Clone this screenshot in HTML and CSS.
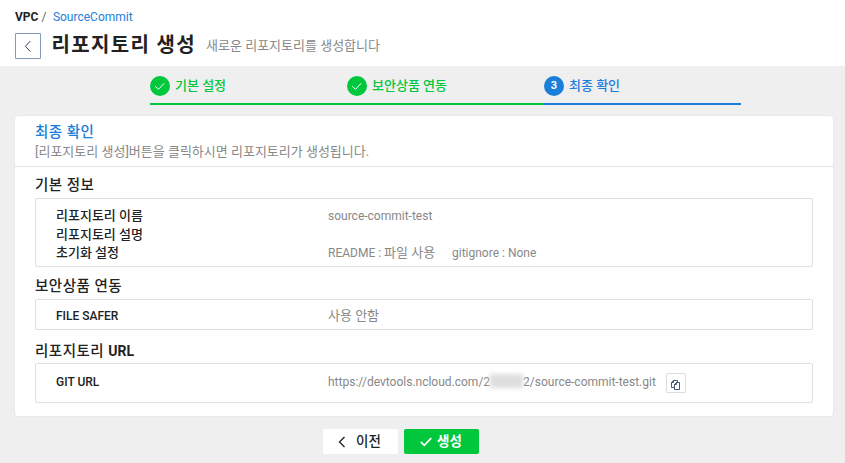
FILE: index.html
```html
<!DOCTYPE html>
<html lang="ko">
<head>
<meta charset="utf-8">
<title>리포지토리 생성</title>
<link rel="stylesheet" href="styles.css">
</head>
<body>
<header class="top">
  <nav class="crumbs"><b>VPC</b><span class="slash">/</span><a class="crumb-link">SourceCommit</a></nav>
  <div class="title-row">
    <button class="back" aria-label="이전"><svg width="24" height="24" viewBox="0 0 24 24"><path d="M14.4 7 9.4 12.3 14.4 17.6"/></svg></button>
    <h1>리포지토리 생성</h1>
    <span class="subtitle">새로운 리포지토리를 생성합니다</span>
  </div>
</header>
<ol class="steps">
  <li class="step"><span class="dot"><svg width="20" height="20" viewBox="0 0 20 20"><path d="M5.2 10.2 8.5 13.3 14.3 7.2"/></svg></span><span class="ko">기본 설정</span></li>
  <li class="step"><span class="dot"><svg width="20" height="20" viewBox="0 0 20 20"><path d="M5.2 10.2 8.5 13.3 14.3 7.2"/></svg></span><span class="ko">보안상품 연동</span></li>
  <li class="step current"><span class="dot">3</span><span class="ko">최종 확인</span></li>
</ol>
<main class="card">
  <div class="card-head">
    <h2>최종 확인</h2>
    <p>[리포지토리 생성]버튼을 클릭하시면 리포지토리가 생성됩니다.</p>
  </div>
  <section>
    <h3>기본 정보</h3>
    <dl class="box basic">
      <dt class="ko">리포지토리 이름</dt><dd>source-commit-test</dd>
      <dt class="ko">리포지토리 설명</dt><dd></dd>
      <dt class="ko">초기화 설정</dt><dd><span class="readme">README : <span class="ko">파일 사용</span></span><span>gitignore : None</span></dd>
    </dl>
  </section>
  <section class="security">
    <h3>보안상품 연동</h3>
    <dl class="box safer"><dt>FILE SAFER</dt><dd class="ko">사용 안함</dd></dl>
  </section>
  <section class="repo">
    <h3>리포지토리 <span class="en">URL</span></h3>
    <dl class="box git"><dt>GIT URL</dt><dd><span>https://devtools.ncloud.com/2</span><span class="mask"></span><span>2/source-commit-test.git</span><button class="copy" aria-label="복사"><svg width="9" height="10" viewBox="0 0 9 10"><path d="M3.5 7.5h-3v-5l2-2h4v2M2.5.5v2h-2M5.5 2.5h3v7h-5v-5zM3.5 4.5h2v-2"/></svg></button></dd></dl>
  </section>
</main>
<footer class="actions">
  <button class="btn prev"><svg width="8" height="12" viewBox="0 0 8 12"><path d="M6.5 1 1.5 6 6.5 11"/></svg>이전</button>
  <button class="btn create"><svg width="12" height="10" viewBox="0 0 12 10"><path d="M.8 4.8 4.3 8.3 11.2 1.2"/></svg>생성</button>
</footer>
</body>
</html>
```
FILE: styles.css
```css
* { box-sizing: border-box; margin: 0; padding: 0; }
body {
  width: 845px; height: 463px; overflow: hidden; background: #efefef; color: #222;
  font: 12px/18px Roboto, "Noto Sans CJK KR", sans-serif;
}
button { font: inherit; color: inherit; }
svg { fill: none; stroke: currentColor; display: block; }
.ko { font-size: 13px; }
.top { height: 66px; background: #fff; padding: 8px 15px 0; }
.crumbs { display: flex; height: 18px; }
.crumbs b { font-weight: 700; }
.slash { margin: 0 6.5px 0 3px; color: #666; }
.crumb-link { color: #2380d8; }
.title-row { display: flex; height: 40px; }
.back {
  width: 26px; height: 26px; margin-top: 7px; border: 1px solid #8298b8;
  border-radius: 1px; background: #fff; color: #354258;
}
h1 { margin-left: 10.5px; font-size: 20px; letter-spacing: 1.35px; line-height: 38px; font-weight: 700; white-space: nowrap; }
.subtitle { margin-left: 10px; color: #888; font-size: 13px; line-height: 39px; }
.steps { display: flex; width: 591px; margin-left: 150px; padding-top: 10px; list-style: none; }
.step {
  flex: 1; display: flex; height: 29px; gap: 5px; border-bottom: 2px solid #00c73c;
  color: #00c73c; font-weight: 500; line-height: 19px;
}
.current { color: #1a7edb; border-color: #1a7edb; }
.dot {
  width: 20px; height: 20px; border-radius: 50%; background: #00c73c; color: #fff;
  font-size: 11px; line-height: 20px; font-weight: 700; text-align: center;
}
.current .dot { background: #1a7edb; }
.card {
  width: 820px; height: 302px; margin: 10px 0 0 14px; border: 1px solid #e9e9e9;
  border-radius: 4px; background: #fff;
}
.card-head { height: 51px; padding: 7px 20px 0; border-bottom: 1px solid #e3e3e3; }
h2 { color: #1a7edb; font-size: 14.5px; letter-spacing: .5px; line-height: 19px; height: 19px; font-weight: 500; }
.card-head p { color: #888; font-size: 13px; line-height: 19px; }
section { padding: 0 20px; }
h3 { height: 31px; padding-top: 9px; font-size: 14.5px; letter-spacing: .5px; line-height: 20px; font-weight: 500; }
.en { font-size: 14px; font-weight: 700; letter-spacing: 0; }
.box {
  display: grid; grid-template-columns: 272px 1fr; padding-left: 20px;
  border: 1px solid #dfdfdf; border-radius: 2px;
}
.basic { height: 69px; padding-top: 8px; grid-auto-rows: 18.5px; }
dt { font-weight: 500; }
dd { display: flex; color: #888; }
.readme { width: 124px; }
.security h3 { height: 32px; padding-top: 10px; }
.safer { height: 31px; padding-top: 7px; }
.repo h3 { height: 33px; padding-top: 11px; }
.git { height: 40px; padding-top: 9px; }
.mask { width: 33px; height: 14px; margin-top: 1px; background: #dedede; filter: blur(2px); }
.copy {
  display: flex; justify-content: center; width: 20px; height: 20px; margin-left: 10px;
  padding-top: 6px; border: 1px solid #ddd; border-radius: 2px; background: #fff; color: #344563;
}
.copy svg { stroke-width: .9; }
.actions { display: flex; gap: 6px; margin: 12px 0 0 323px; }
.btn {
  display: flex; align-items: center; width: 75px; height: 25px; border: 0;
  border-radius: 2px; background: #fff; font-size: 13.5px; line-height: 24px; padding-bottom: 1px; font-weight: 500;
}
.prev { padding-left: 15px; gap: 10px; }
.prev svg { stroke-width: 1.3; margin-top: 1px; }
.create { padding-left: 16px; gap: 5px; background: #00c73c; color: #fff; font-weight: 700; }
.create svg { stroke-width: 1.7; margin-top: 1px; }
```
